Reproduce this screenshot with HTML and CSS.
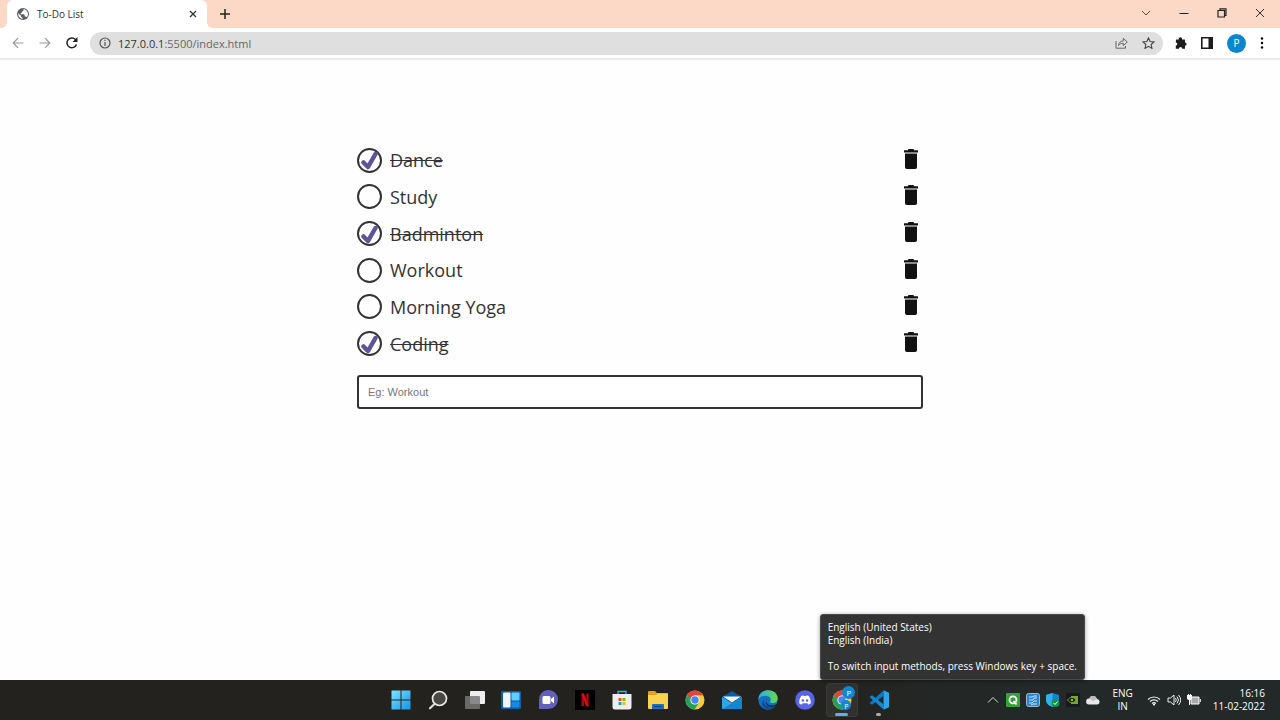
FILE: index.html
```html
<!DOCTYPE html>
<html lang="en">
<head>
<meta charset="utf-8">
<title>To-Do List</title>
<link rel="stylesheet" href="styles.css">
</head>
<body>
<svg class="defs" aria-hidden="true">
  <symbol id="check" viewBox="0 0 20 20"><path d="M3.500 12.500 8 17 15.500 4" fill="none" stroke="#5c5596" stroke-width="4.500" stroke-linecap="round" stroke-linejoin="round"/></symbol>
  <symbol id="trash" viewBox="0 0 14 20"><path d="M0 1.200h4V1q0-1 1-1h4q1 0 1 1v.2h4v2.300H0zM1 4.500h12v13.700q0 1.800-1.800 1.800H2.800Q1 20 1 18.200z" fill="#111"/></symbol>
  <symbol id="chrome" viewBox="0 0 20 20"><circle cx="10" cy="10" r="9.500" fill="#f9cb35"/><path d="M10 10 1.800 5.200A9.500 9.500 0 0 1 18.200 5.200H10z" fill="#e0463b"/><path d="M1.800 5.200A9.500 9.500 0 0 0 9.500 19.500L14.200 12.400 10 10 5.900 12.400z" fill="#23a05a"/><path d="M1.800 5.200 5.900 12.400 10 5.200z" fill="#e0463b"/><path d="M1.800 5.200 5.900 12.400 6 8z" fill="#23a05a"/><circle cx="10" cy="10" r="4.600" fill="#fff"/><circle cx="10" cy="10" r="3.700" fill="#4285f4"/></symbol>
</svg>

<header class="browser">
  <div class="tabstrip">
    <div class="tab">
      <svg class="globe" viewBox="0 0 12 12"><circle cx="6" cy="6" r="6" fill="#5b5f64"/><path d="M1.200 5.200 4 7.800v1l1.500 1v1.100A5 5 0 0 1 1.200 5.200zM6.500 1.100v1.500L5 3.800v1H3.800v1.400h3l1 1v1.300h1.300l.8.800A5 5 0 0 0 8 1.600z" fill="#fff"/></svg>
      <span class="tab-title">To-Do List</span>
      <button class="plain" aria-label="Close tab"><svg width="8" height="8" viewBox="0 0 8 8"><path d="M1 1l6 6M7 1 1 7" stroke="#333" stroke-width="1.300"/></svg></button>
    </div>
    <button class="plain new-tab" aria-label="New tab"><svg width="10" height="10" viewBox="0 0 10 10"><path d="M5 0v10M0 5h10" stroke="#222" stroke-width="1.500"/></svg></button>
    <div class="window-controls">
      <button class="plain" aria-label="Search tabs"><svg width="10" height="10" viewBox="0 0 10 10"><path d="M1 3l4 4 4-4" fill="none" stroke="#5a4a44"/></svg></button>
      <button class="plain" aria-label="Minimize"><svg width="10" height="10" viewBox="0 0 10 10"><path d="M.5 5.500h9" stroke="#222"/></svg></button>
      <button class="plain" aria-label="Restore"><svg width="10" height="10" viewBox="0 0 10 10"><path d="M1 2.500h6.500V9H1zM3 2.500V.8h6V7.500H7.500" fill="none" stroke="#222" stroke-width="1.200"/></svg></button>
      <button class="plain" aria-label="Close window"><svg width="10" height="10" viewBox="0 0 10 10"><path d="M1 1l8 8M9 1 1 9" stroke="#333"/></svg></button>
    </div>
  </div>
  <div class="toolbar">
    <div class="nav">
      <button class="plain" aria-label="Back"><svg width="12" height="12" viewBox="0 0 12 12"><path d="M11.500 6H1.500M6 1.200 1.200 6 6 10.800" fill="none" stroke="#9a9a9a" stroke-width="1.200"/></svg></button>
      <button class="plain" aria-label="Forward"><svg width="12" height="12" viewBox="0 0 12 12"><path d="M.5 6h10M6 1.200 10.800 6 6 10.800" fill="none" stroke="#9a9a9a" stroke-width="1.200"/></svg></button>
      <button class="plain" aria-label="Reload"><svg width="12" height="12" viewBox="0 0 12 12"><path d="M10.500 7.500A4.900 4.900 0 1 1 9.500 2.500L10.500 3.600" fill="none" stroke="#222" stroke-width="1.500"/><path d="M11.500 0v5h-5z" fill="#222"/></svg></button>
    </div>
    <div class="address">
      <svg width="12" height="12" viewBox="0 0 12 12"><circle cx="6" cy="6" r="5" fill="none" stroke="#555" stroke-width="1.200"/><path d="M6 5v4M6 2.800v1.300" stroke="#555" stroke-width="1.200"/></svg>
      <span class="url">127.0.0.1<span class="url-rest">:5500/index.html</span></span>
      <button class="plain" aria-label="Share"><svg width="13" height="12" viewBox="0 0 13 12"><path d="M1 4v7.200h9.500V9M3.500 8.500C4 5.500 5.500 4 8.300 4V1.300L12.300 5 8.300 8.600V6.300C6 6.300 4.700 7 3.500 8.500z" fill="none" stroke="#666"/></svg></button>
      <button class="plain" aria-label="Bookmark"><svg width="13" height="12" viewBox="0 0 13 12"><path d="M6.500.9 8.100 4.500l4 .4-3 2.600.9 3.900-3.500-2.100L3 11.400l.9-3.900-3-2.600 4-.4z" fill="none" stroke="#444" stroke-width="1.100"/></svg></button>
    </div>
    <div class="extras">
      <button class="plain" aria-label="Extensions"><svg width="12" height="12" viewBox="0 0 12 12"><path d="M1 2.500h2.800a1.700 1.700 0 1 1 3.200 0h3v3a1.600 1.600 0 1 1 0 3.200v3H7.200a1.600 1.600 0 0 0-3.200 0H.8V8.600a1.500 1.500 0 0 0 0-3z" fill="#1d1d1d"/></svg></button>
      <button class="plain" aria-label="Side panel"><svg width="12" height="12" viewBox="0 0 12 12"><path d="M0 0h12v12H0zM1.600 1.600v8.800H7.500V1.600z" fill="#1d1d1d" fill-rule="evenodd"/></svg></button>
      <button class="plain avatar">P</button>
      <button class="plain" aria-label="Menu"><svg width="4" height="12" viewBox="0 0 4 12"><circle cx="2" cy="1.500" r="1.200"/><circle cx="2" cy="6" r="1.200"/><circle cx="2" cy="10.500" r="1.200"/></svg></button>
    </div>
  </div>
</header>

<main class="page">
  <div class="todo">
    <ul class="list">
      <li class="item"><label class="task"><span class="tick"><input type="checkbox" checked><svg><use href="#check"/></svg></span><span class="name">Dance</span></label><button class="plain delete" aria-label="Delete Dance"><svg><use href="#trash"/></svg></button></li>
      <li class="item"><label class="task"><span class="tick"><input type="checkbox"><svg><use href="#check"/></svg></span><span class="name">Study</span></label><button class="plain delete" aria-label="Delete Study"><svg><use href="#trash"/></svg></button></li>
      <li class="item"><label class="task"><span class="tick"><input type="checkbox" checked><svg><use href="#check"/></svg></span><span class="name">Badminton</span></label><button class="plain delete" aria-label="Delete Badminton"><svg><use href="#trash"/></svg></button></li>
      <li class="item"><label class="task"><span class="tick"><input type="checkbox"><svg><use href="#check"/></svg></span><span class="name">Workout</span></label><button class="plain delete" aria-label="Delete Workout"><svg><use href="#trash"/></svg></button></li>
      <li class="item"><label class="task"><span class="tick"><input type="checkbox"><svg><use href="#check"/></svg></span><span class="name">Morning Yoga</span></label><button class="plain delete" aria-label="Delete Morning Yoga"><svg><use href="#trash"/></svg></button></li>
      <li class="item"><label class="task"><span class="tick"><input type="checkbox" checked><svg><use href="#check"/></svg></span><span class="name">Coding</span></label><button class="plain delete" aria-label="Delete Coding"><svg><use href="#trash"/></svg></button></li>
    </ul>
    <input class="new-task" type="text" placeholder="Eg: Workout" aria-label="New task">
  </div>
</main>

<footer class="taskbar">
  <nav class="apps">
    <button class="plain" aria-label="Start"><svg viewBox="0 0 20 20"><defs><linearGradient id="win" x2="1" y2="1"><stop stop-color="#7fe3fb"/><stop offset="1" stop-color="#0f96ee"/></linearGradient></defs><path d="M.5.500h9v9h-9zM10.500.500h9v9h-9zM.5 10.500h9v9h-9zM10.500 10.500h9v9h-9z" fill="url(#win)"/></svg></button>
    <button class="plain" aria-label="Search"><svg viewBox="0 0 20 20"><path d="M6.500 14 2 18.300" stroke="#ddd" stroke-width="2.200" stroke-linecap="round"/><circle cx="11.500" cy="8.500" r="7" fill="#494847" stroke="#e8e8e8" stroke-width="1.700"/></svg></button>
    <button class="plain" aria-label="Task view"><svg viewBox="0 0 20 20"><rect x="5" y="1" width="15" height="13" rx="1" fill="#eee"/><rect x="0" y="6" width="15" height="13" rx="1" fill="#777" fill-opacity=".85"/></svg></button>
    <button class="plain" aria-label="Widgets"><svg viewBox="0 0 20 20"><rect y="1" width="20" height="18" rx="1" fill="#075ea9"/><rect x="2" y="2.500" width="7.500" height="15" rx="1" fill="#f1f5f8"/><rect x="10.500" y="2.500" width="8" height="8" rx="1" fill="#62cdfd"/><rect x="10.500" y="11.500" width="8" height="6" rx="1" fill="#168be0"/></svg></button>
    <button class="plain" aria-label="Chat"><svg viewBox="0 0 20 20"><path d="M1 19V10a9.500 9.500 0 1 1 9.500 9z" fill="#6260bd"/><rect x="4.500" y="6" width="8" height="8" rx="1.500" fill="#fff"/><path d="m13 9 3-2.500v7L13 11z" fill="#fff"/></svg></button>
    <button class="plain" aria-label="Netflix"><svg viewBox="0 0 20 20"><path d="M0 0h20v20H0z" fill="#000"/><path d="M6.500 3.500H9V16l-2.500.4zM11.200 3.500h2.500v12.900l-2.500-.4z" fill="#a90711"/><path d="M6.500 3.500H9l4.700 12.900-2.700-.3z" fill="#e50914"/></svg></button>
    <button class="plain" aria-label="Store"><svg viewBox="0 0 20 20"><path d="M6 5V1.500h8V5" fill="none" stroke="#3cb4e5" stroke-width="1.300"/><path d="M.5 4h19v13q0 2.500-2.500 2.500H3Q.5 19.500.5 17z" fill="#eee"/><path d="M6.500 8h3v3h-3z" fill="#f25022"/><path d="M10.500 8h3v3h-3z" fill="#7fba00"/><path d="M6.500 12h3v3h-3z" fill="#00a4ef"/><path d="M10.500 12h3v3h-3z" fill="#ffb900"/></svg></button>
    <button class="plain" aria-label="File Explorer"><svg viewBox="0 0 20 20"><path d="M0 2q0-1 1-1h6l2 2h10q1 0 1 1v5H0z" fill="#dda21d"/><path d="M0 5h8l2-1.500h10V18q0 1-1 1H1q-1 0-1-1z" fill="#fbd250"/><path d="M4 19v-4q0-1 1-1h10q1 0 1 1v4z" fill="#1672ba"/><path d="M6 16.500h8" stroke="#09447f"/></svg></button>
    <button class="plain" aria-label="Chrome"><svg><use href="#chrome"/></svg></button>
    <button class="plain" aria-label="Mail"><svg viewBox="0 0 20 20"><path d="M0 7 10 1l10 6v3H0z" fill="#0c59a4"/><path d="M0 7l10 6 10-6v11q0 1-1 1H1q-1 0-1-1z" fill="#2aa8e9"/><path d="M20 7v11q0 1-1 1H1L10 13z" fill="#1585d0"/><path d="M1 6.500h18L10 12.500z" fill="#edf6fb"/></svg></button>
    <button class="plain" aria-label="Edge"><svg viewBox="0 0 20 20"><defs><linearGradient id="edge"><stop stop-color="#27aee5"/><stop offset="1" stop-color="#68d94b"/></linearGradient></defs><circle cx="10" cy="10" r="9.700" fill="#116fc4"/><path d="M.3 10C.3-3 19.700-2.500 19.700 8.500c0 4-4.500 5.400-7.200 4-1.500-.8.600-1.500.2-3.500C11.500 4.500 2 4.500.3 10z" fill="url(#edge)"/><path d="M7 9.500c-3 3 1 9.500 10.500 6.500-3 4-9 4.500-12 1.500C3 14.500 3.500 10.500 7 9.500z" fill="#0b4f9c"/><path d="M9 8.500c-2 1-1 6.500 4 6.800 3 .2 5-.8 6-1.800l1 2-2.500.8c-7 1.800-12-2-8.500-7.800z" fill="#24221f"/></svg></button>
    <button class="plain" aria-label="Discord"><svg viewBox="0 0 20 20"><circle cx="10" cy="10" r="9.800" fill="#5865e8"/><path d="M6.200 6 8.300 5.200l.5.900h2.400l.5-.9 2.100.8c1.500 2.300 2.200 4.700 2 7.200-1 .9-2 1.200-2.700 1.400l-.8-1.300H7.700l-.8 1.300c-1-.2-1.900-.7-2.700-1.400-.2-2.500.5-4.900 2-7.200z" fill="#fff"/><circle cx="7.900" cy="10.500" r="1.200" fill="#5865e8"/><circle cx="12.100" cy="10.500" r="1.200" fill="#5865e8"/></svg></button>
    <button class="plain active" aria-label="Chrome, running"><svg><use href="#chrome"/></svg><span class="badge badge-large">P</span><span class="badge badge-small">P</span></button>
    <button class="plain open" aria-label="Visual Studio Code"><svg viewBox="0 0 20 20"><path d="M14.500.500v5.500L3 14.800.5 13z" fill="#0b79bd"/><path d="M.5 7 3 5.200l11.500 9v5.300z" fill="#1687cf"/><path d="M14.500.300 20 2.700v14.600l-5.500 2.400z" fill="#2aa4ed"/></svg></button>
  </nav>
  <div class="tray">
    <div class="tray-icons">
      <button class="plain" aria-label="Hidden icons"><svg viewBox="0 0 14 14"><path d="M2 9.500 7 4.500l5 5" fill="none" stroke="#ddd"/></svg></button>
      <svg viewBox="0 0 14 14"><rect width="14" height="14" rx="1" fill="#36a136"/><circle cx="7" cy="6.800" r="3.500" fill="none" stroke="#fff" stroke-width="1.800"/><path d="m7.500 8 3 3.500" stroke="#fff" stroke-width="1.800"/></svg>
      <svg viewBox="0 0 14 14"><rect x=".5" y=".5" width="13" height="13" rx="2" fill="#2c83cf" stroke="#a4b6bd"/><path d="M3 4h3l2-1h3M3 7h4l1-2h3M3 10h3l2-2h3M5 12l2-1h4" fill="none" stroke="#c5e4f8"/></svg>
      <svg viewBox="0 0 14 14"><path d="M6.500 0 13 2v5c0 4-4 6-6.500 7C4 13 0 11 0 7V2z" fill="#1184d8"/><path d="M6.500 0v14C4 13 0 11 0 7V2z" fill="#35afe9"/><circle cx="9.500" cy="10" r="4" fill="#149448"/><path d="m7.500 10 1.500 1.500 2.500-3" fill="none" stroke="#fff"/></svg>
      <svg viewBox="0 0 14 14"><path d="M0 0h14v14H0z" fill="#171a18"/><path d="M5 3h7v8H5z" fill="#77a626"/><path d="M1.500 7C4 3.500 8 3.500 10 7c-2 3.500-6 3.500-8.500 0z" fill="#171a18" stroke="#77a626"/><circle cx="6" cy="7" r="1.300" fill="#8fb742"/></svg>
      <svg viewBox="0 0 14 14"><path d="M3 11.500a3 3 0 0 1 .2-6A4.200 4.200 0 0 1 11 6a2.800 2.800 0 0 1 .5 5.500z" fill="#e9e9e9"/><path d="M3.200 5.500A4.200 4.200 0 0 1 11 6L7 8z" fill="#bdbdbd"/></svg>
    </div>
    <button class="plain language">ENG<br>IN</button>
    <div class="status">
      <svg viewBox="0 0 14 14"><path d="M1 6.500a8.500 8.500 0 0 1 12 0M3 8.500a5.700 5.700 0 0 1 8 0M5 10.500a3 3 0 0 1 4 0" fill="none" stroke="#eee" stroke-width="1.100"/><circle cx="7" cy="11.500" r="1.100" fill="#fff"/></svg>
      <svg viewBox="0 0 14 14"><path d="M1 5h2.500L7 2v10L3.500 9H1zM8.500 5q1.500 2 0 4M10 3.500q3 3.500 0 7M11.500 2q4.500 5 0 10" fill="none" stroke="#eee"/></svg>
      <svg viewBox="0 0 14 14"><path d="M4 4h8v7H4z" fill="#aaa" stroke="#fff"/><path d="M13.300 6v3M2.500 7v5" stroke="#fff"/><path d="M0 2h1V1h1v1h1V1h1v1h1v4L3.500 7h-2L0 6z" fill="#fff"/></svg>
    </div>
    <button class="plain clock">16:16<br>11-02-2022</button>
  </div>
  <div class="tooltip" role="tooltip">English (United States)<br>English (India)<br><br>To switch input methods, press Windows key + space.</div>
</footer>
</body>
</html>
```

FILE: styles.css
```css
* { box-sizing: border-box; }

body {
  margin: 0;
  min-height: 100vh;
  display: flex;
  flex-direction: column;
  background: #fefefe;
  color: #333;
  font-family: "Open Sans", "Noto Sans", sans-serif;
}

.defs { display: none; }
svg { display: block; flex: none; }

.plain {
  padding: 0;
  border: 0;
  background: none;
  color: inherit;
  font: inherit;
  display: flex;
  align-items: center;
  justify-content: center;
}

/* Browser chrome */
.browser { border-bottom: 2px solid #ececec; }

.tabstrip {
  display: flex;
  align-items: center;
  height: 28px;
  background: #fcd9c7;
}

.tab {
  position: relative;
  display: flex;
  align-items: center;
  gap: 8px;
  width: 200px;
  height: 28px;
  margin-left: 7px;
  padding: 0 10px;
  background: #fff;
  border-radius: 6px 6px 0 0;
  font-size: 10px;
}

.tab::before,
.tab::after {
  content: "";
  position: absolute;
  bottom: 0;
  width: 6px;
  height: 6px;
}
.tab::before { right: 100%; background: radial-gradient(circle at 0 0, #fcd9c7 6px, #fff 6px); }
.tab::after { left: 100%; background: radial-gradient(circle at 100% 0, #fcd9c7 6px, #fff 6px); }

.globe { width: 12px; height: 12px; }
.tab-title { flex: 1; }
.new-tab { margin-left: 13px; }

.window-controls {
  display: flex;
  gap: 28px;
  margin-left: auto;
  padding: 0 15px 3px 0;
}

.toolbar {
  display: flex;
  align-items: center;
  height: 30px;
  background: #fff;
  padding: 0 16px 0 12px;
}

.nav { display: flex; gap: 15px; margin-right: 12px; }

.address {
  flex: 1;
  display: flex;
  align-items: center;
  gap: 14px;
  height: 23px;
  padding: 0 8px 0 9px;
  border-radius: 12px;
  background: #dfdfdf;
  font-size: 11px;
}

.url { flex: 1; margin-left: -7px; }
.url-rest { color: #666; }

.extras { display: flex; align-items: center; gap: 14px; margin-left: 12px; }

.avatar {
  width: 19px;
  height: 19px;
  border-radius: 50%;
  background: #0b86d0;
  color: #fff;
  font-size: 10px;
}

/* To-do page */
.page {
  flex: 1;
  padding: 82px 20px 20px;
}

.todo {
  max-width: 566px;
  margin: 0 auto;
}

.list {
  display: grid;
  grid-auto-rows: 1fr;
  min-height: 220px;
  margin: 0 0 13px;
  padding: 0;
  list-style: none;
}

.item {
  display: flex;
  align-items: center;
  justify-content: space-between;
}

.task { display: flex; align-items: center; gap: 8px; }

.tick { display: grid; place-items: center; }
.tick > * { grid-area: 1 / 1; }

.tick input {
  appearance: none;
  width: 25px;
  height: 25px;
  margin: 0;
  border: 2px solid #333;
  border-radius: 50%;
}

.tick svg { width: 20px; height: 20px; visibility: hidden; }
.tick input:checked + svg { visibility: visible; }

.name { font-size: 18px; line-height: 24px; }
.task:has(:checked) .name { text-decoration: line-through; }

.delete { padding: 0 5px 3px 0; }
.delete svg { width: 14px; height: 20px; }

.new-task {
  display: block;
  width: 100%;
  height: 34px;
  padding: 0 9px;
  border: 2px solid #333;
  border-radius: 3px;
  background: #fff;
  font: 11px "Liberation Sans", Arial, sans-serif;
}
.new-task::placeholder { color: #777; }

/* Taskbar */
.taskbar {
  position: relative;
  display: grid;
  grid-template-columns: 1fr 514px 1fr;
  height: 40px;
  background: linear-gradient(90deg, #24221f 60%, #232928 80%);
  color: #fff;
  font-size: 10px;
  line-height: 13px;
}

.apps {
  grid-column: 2;
  display: grid;
  grid-template-columns: repeat(14, 1fr);
}

.apps button { position: relative; }
.apps svg { width: 20px; height: 20px; }

.active::before {
  content: "";
  position: absolute;
  inset: 3px 2px;
  border: 1px solid #3b3b39;
  border-radius: 3px;
  background: #32312f;
}
.active svg { position: relative; }

.active::after,
.open::after {
  content: "";
  position: absolute;
  bottom: 4px;
  width: 13px;
  height: 3px;
  border-radius: 2px;
  background: #55b6ec;
}
.open::after { width: 5px; background: #aaa; }

.badge {
  position: absolute;
  display: grid;
  place-items: center;
  border-radius: 50%;
  background: #1686cb;
}
.badge-large { width: 13px; height: 13px; top: 6px; right: 5px; font-size: 8px; }
.badge-small { width: 10px; height: 10px; bottom: 10px; right: 9px; font-size: 7px; }

.tray {
  display: flex;
  align-items: center;
  justify-content: flex-end;
  padding-right: 15px;
}

.tray svg { width: 14px; height: 14px; }
.tray-icons { display: flex; gap: 6px; }
.language { margin: 0 14px 0 12px; }
.status { display: flex; gap: 6px; margin-right: 12px; }
.clock { text-align: right; }

.tooltip {
  position: absolute;
  right: 195px;
  bottom: 40px;
  padding: 6px 7px;
  border: 1px solid #4a4a4a;
  border-radius: 3px;
  background: #333;
  box-shadow: 0 1px 4px rgba(0, 0, 0, 0.4);
  white-space: nowrap;
}
```
